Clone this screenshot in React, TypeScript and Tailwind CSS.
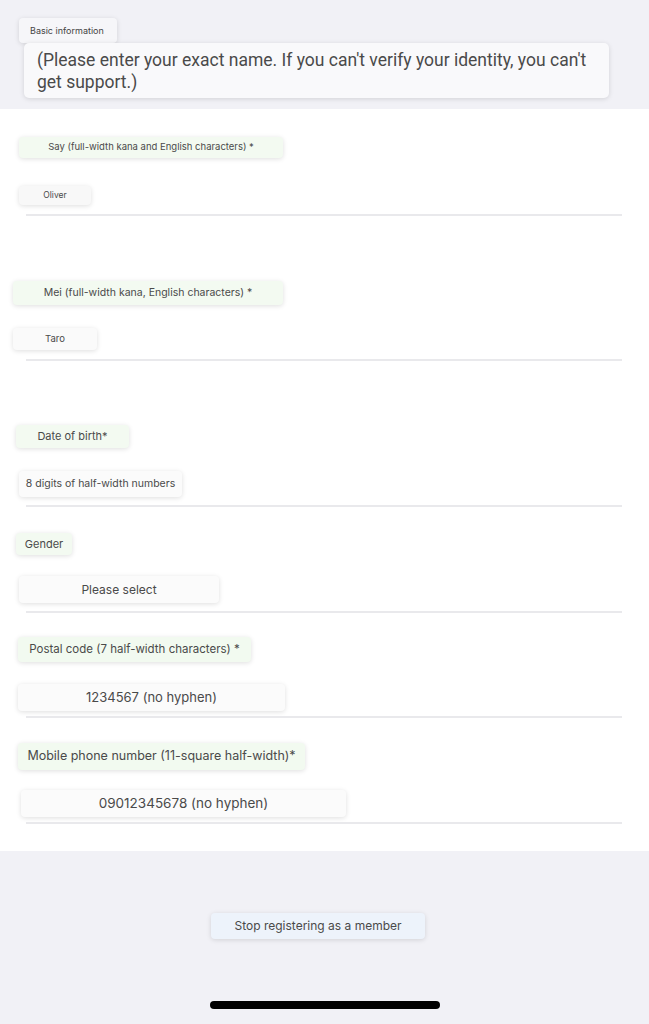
import React from "react";

const shadow = "shadow-[0_1px_5px_rgba(0,0,0,0.13)]";

function Box({ cls, text }: { cls: string; text: string }) {
  return (
    <div className={`flex items-center justify-center rounded-[4px] ${shadow} ${cls}`}>
      <span className="whitespace-nowrap">{text}</span>
    </div>
  );
}

function Line({ cls }: { cls: string }) {
  return <div className={`ml-[26px] w-[596px] h-[2px] bg-[#e9e9ec] ${cls}`} />;
}

export default function App() {
  return (
    <div className="w-[649px] h-[1024px] bg-[#f1f1f6] font-['Inter',sans-serif] text-[#4a4a4a] flex flex-col overflow-hidden">
      {/* top */}
      <div className="h-[109px] flex flex-col items-start">
        <div className={`mt-[18px] ml-[19px] w-[98px] h-[25px] bg-[#f6f6f9] rounded-[4px] ${shadow} flex items-center pl-[11px] text-[9px] text-[#444]`}>
          Basic information
        </div>
        <div className={`ml-[24px] w-[585px] h-[55px] bg-[#f9f9fb] rounded-[5px] ${shadow} px-[13px] pt-[6px] font-['Roboto',sans-serif] text-[17.5px] leading-[22px] text-[#4a4a4a]`}>
          (Please enter your exact name. If you can't verify your identity, you can't get support.)
        </div>
      </div>

      {/* white form */}
      <div className="h-[742px] bg-white flex flex-col items-start">
        <Box cls="mt-[28px] ml-[19px] w-[264px] h-[21px] bg-[#f3faf1] text-[9.5px]" text="Say (full-width kana and English characters) *" />
        <Box cls="mt-[28px] ml-[19px] w-[72px] h-[19px] bg-[#f8f8f8] text-[8.5px]" text="Oliver" />
        <Line cls="mt-[9px]" />

        <Box cls="mt-[65px] ml-[13px] w-[270px] h-[24px] bg-[#f3faf1] text-[10.5px]" text="Mei (full-width kana, English characters) *" />
        <Box cls="mt-[23px] ml-[13px] w-[84px] h-[22px] bg-[#fafafa] text-[9.5px]" text="Taro" />
        <Line cls="mt-[9px]" />

        <Box cls="mt-[64px] ml-[16px] w-[113px] h-[23px] bg-[#f3faf1] text-[11px]" text="Date of birth*" />
        <Box cls="mt-[23px] ml-[19px] w-[163px] h-[26px] bg-[#fbfbfb] text-[10.5px]" text="8 digits of half-width numbers" />
        <Line cls="mt-[8px]" />

        <Box cls="mt-[26px] ml-[16px] w-[56px] h-[22px] bg-[#f3faf1] text-[11px]" text="Gender" />
        <Box cls="mt-[21px] ml-[19px] w-[200px] h-[27px] bg-[#fbfbfb] text-[12px]" text="Please select" />
        <Line cls="mt-[8px]" />

        <Box cls="mt-[24px] ml-[18px] w-[233px] h-[25px] bg-[#f2faf0] text-[11.5px]" text="Postal code (7 half-width characters) *" />
        <Box cls="mt-[22px] ml-[18px] w-[267px] h-[27px] bg-[#fbfbfb] text-[13px]" text="1234567 (no hyphen)" />
        <Line cls="mt-[5px]" />

        <Box cls="mt-[25px] ml-[18px] w-[287px] h-[27px] bg-[#f2faf0] text-[12.5px]" text="Mobile phone number (11-square half-width)*" />
        <Box cls="mt-[20px] ml-[21px] w-[325px] h-[27px] bg-[#fbfbfb] text-[13.5px]" text="09012345678 (no hyphen)" />
        <Line cls="mt-[5px]" />
      </div>

      {/* bottom */}
      <div className="flex-1 flex flex-col items-start">
        <div className={`mt-[62px] ml-[211px] w-[214px] h-[26px] rounded-[4px] bg-[#edf3fb] ${shadow} flex items-center justify-center text-[12px] text-[#4a4a4a]`}>
          Stop registering as a member
        </div>
        <div className="mt-[62px] ml-[210px] w-[230px] h-[8px] rounded-full bg-black" />
      </div>
    </div>
  );
}
